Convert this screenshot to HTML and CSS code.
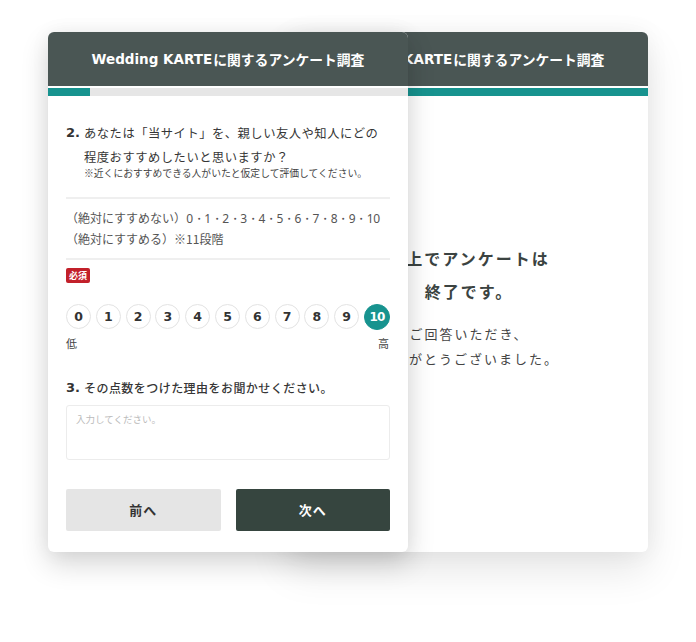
FILE: index.html
```html
<!DOCTYPE html>
<html lang="ja">
<head>
<meta charset="utf-8">
<title>Wedding KARTE アンケート</title>
<link rel="stylesheet" href="styles.css">
</head>
<body>
<div class="stage">
  <section class="card back">
    <header class="bar"><span class="lat">Wedding KARTE</span>に関するアンケート調査</header>
    <div class="progress"><div class="fill" style="width:100%"></div></div>
    <div class="done">
      <p class="done-title">以上でアンケートは<br>終了です。</p>
      <p class="done-text">ご回答いただき、<br>ありがとうございました。</p>
    </div>
  </section>

  <section class="card front">
    <header class="bar"><span class="lat">Wedding KARTE</span>に関するアンケート調査</header>
    <div class="progress"><div class="fill" style="width:42px"></div></div>
    <div class="body">
      <div class="q">
        <span class="num lat">2.</span>
        <div class="q-text">
          <p class="q-main">あなたは「当サイト」を、親しい友人や知人にどの<br>程度おすすめしたいと思いますか？</p>
          <p class="q-note">※近くにおすすめできる人がいたと仮定して評価してください。</p>
        </div>
      </div>
      <div class="scale-desc">
        <p>（絶対にすすめない）<span class="lat-r">0・1・2・3・4・5・6・7・8・9・10</span><br>（絶対にすすめる）※11段階</p>
      </div>
      <span class="badge">必須</span>
      <div class="scale">
        <span class="pt">0</span>
        <span class="pt">1</span>
        <span class="pt">2</span>
        <span class="pt">3</span>
        <span class="pt">4</span>
        <span class="pt">5</span>
        <span class="pt">6</span>
        <span class="pt">7</span>
        <span class="pt">8</span>
        <span class="pt">9</span>
        <span class="pt on">10</span>
      </div>
      <div class="ends"><span>低</span><span>高</span></div>
      <div class="q q3">
        <span class="num lat">3.</span>
        <p class="q-main">その点数をつけた理由をお聞かせください。</p>
      </div>
      <div class="input">入力してください。</div>
      <div class="actions">
        <button class="btn prev" type="button">前へ</button>
        <button class="btn next" type="button">次へ</button>
      </div>
    </div>
  </section>
</div>
</body>
</html>
```

FILE: styles.css
```css
html, body {
  margin: 0;
  padding: 0;
  background: #ffffff;
}

body {
  font-family: "Noto Sans CJK JP", "Noto Sans", sans-serif;
  color: #3a3a3a;
  width: 696px;
  height: 642px;
  overflow: hidden;
}

p {
  margin: 0;
}

.stage {
  display: grid;
  grid-template-columns: 360px;
  padding: 32px 0 0 48px;
}

.card {
  grid-area: 1 / 1;
  width: 360px;
  height: 520px;
  background: #ffffff;
  border-radius: 6px;
  display: flex;
  flex-direction: column;
}

.back {
  margin-left: 240px;
  box-shadow: 0 18px 40px rgba(0, 0, 0, 0.10), 0 0 24px rgba(0, 0, 0, 0.05);
}

.front {
  z-index: 1;
  box-shadow: 0 12px 28px rgba(0, 0, 0, 0.16), 0 0 20px rgba(0, 0, 0, 0.05);
}

.bar {
  height: 54px;
  flex: none;
  display: flex;
  align-items: center;
  justify-content: center;
  background: #4a5654;
  color: #ffffff;
  font-weight: 700;
  font-size: 13.8px;
  border-radius: 6px 6px 0 0;
}

.lat {
  font-family: "DejaVu Sans", "Noto Sans", sans-serif;
  font-weight: 700;
}

.bar .lat {
  font-size: 13.5px;
  margin-right: 1px;
}

.progress {
  margin-top: 2px;
  height: 8px;
  flex: none;
  background: #e6e6e6;
}

.fill {
  height: 100%;
  background: #17938f;
}

/* back card */
.done {
  padding-top: 146px;
  text-align: center;
  color: #3b4341;
}

.done-title {
  font-size: 16px;
  font-weight: 700;
  line-height: 33px;
  letter-spacing: 2px;
  padding-left: 2px;
}

.done-text {
  margin-top: 13px;
  font-size: 13px;
  line-height: 25px;
  letter-spacing: 2px;
  padding-left: 2px;
  color: #444;
}

/* front card */
.body {
  padding: 25px 18px 21px;
  display: flex;
  flex-direction: column;
}

.q {
  display: flex;
  align-items: flex-start;
}

.num {
  width: 18px;
  flex: none;
  font-size: 13px;
  line-height: 24px;
  color: #333;
}

.q-main {
  font-size: 12.3px;
  line-height: 24px;
  letter-spacing: 0.5px;
  color: #363636;
}

.q-note {
  margin-top: -3px;
  font-size: 9.8px;
  line-height: 14px;
  color: #444;
}

.scale-desc {
  margin-top: 17px;
  border-top: 2px solid #efefef;
  border-bottom: 2px solid #efefef;
  padding: 9px 0;
  font-size: 12px;
  line-height: 20px;
  color: #555;
}

.lat-r {
  font-family: "Noto Sans", sans-serif;
  letter-spacing: -0.4px;
}

.badge {
  align-self: flex-start;
  margin-top: 8px;
  height: 15px;
  padding: 0 3px;
  background: #c2202a;
  color: #ffffff;
  font-size: 9px;
  font-weight: 700;
  line-height: 15px;
  border-radius: 2px;
}

.scale {
  margin-top: 21px;
  display: flex;
  justify-content: space-between;
}

.pt {
  width: 25px;
  height: 25px;
  box-sizing: border-box;
  border: 1.5px solid #e3e3e3;
  border-radius: 50%;
  display: flex;
  align-items: center;
  justify-content: center;
  font-family: "DejaVu Sans", sans-serif;
  font-weight: 700;
  font-size: 12.5px;
  color: #333;
}

.pt.on {
  background: #17938f;
  border-color: #17938f;
  color: #ffffff;
  width: 26px;
  height: 26px;
  margin-top: -0.5px;
  letter-spacing: -0.8px;
  font-size: 12px;
}

.ends {
  margin-top: 6px;
  display: flex;
  justify-content: space-between;
  font-size: 11px;
  line-height: 14px;
  color: #444;
  padding-right: 1px;
}

.q3 {
  margin-top: 26px;
}

.q3 .q-main {
  font-weight: 500;
  letter-spacing: 0.45px;
  font-size: 12px;
}

.input {
  margin-top: 5px;
  height: 55px;
  box-sizing: border-box;
  border: 1.5px solid #ececec;
  border-radius: 3px;
  padding: 6px 9px;
  font-size: 9.5px;
  line-height: 14px;
  color: #bbbbbb;
}

.actions {
  margin-top: 29px;
  display: flex;
  gap: 15px;
}

.btn {
  flex: 1;
  height: 42px;
  border: none;
  border-radius: 2px;
  font-family: "Noto Sans CJK JP", sans-serif;
  font-size: 13px;
  font-weight: 700;
  letter-spacing: 1px;
  cursor: pointer;
}

.prev {
  background: #e5e5e5;
  color: #333;
}

.next {
  background: #36453f;
  color: #ffffff;
}
```
